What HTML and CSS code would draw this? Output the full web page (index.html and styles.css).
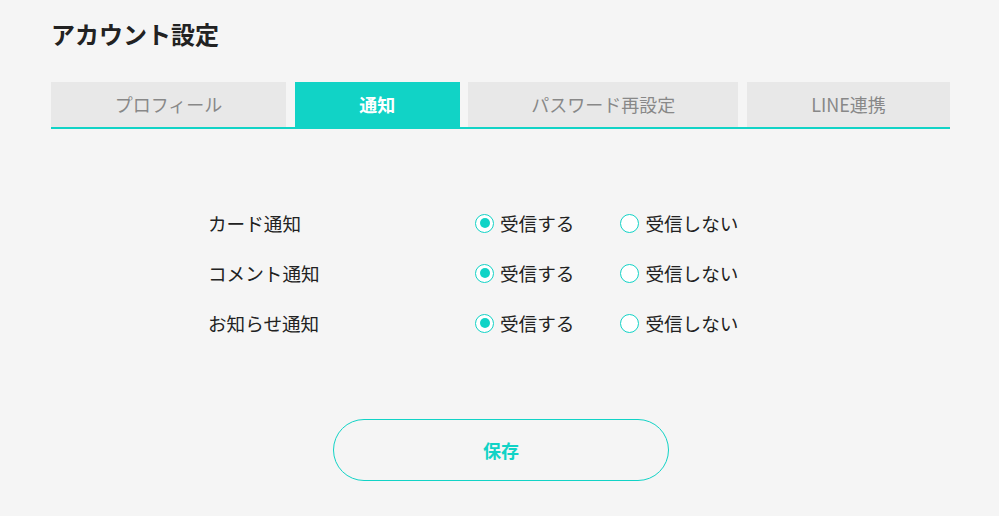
FILE: index.html
```html
<!DOCTYPE html>
<html lang="ja">
<head>
<meta charset="utf-8">
<link rel="stylesheet" href="styles.css">
</head>
<body>
<div class="page">
  <h1 class="title">アカウント設定</h1>
  <nav class="tabs">
    <div class="tab">プロフィール</div>
    <div class="tab active">通知</div>
    <div class="tab">パスワード再設定</div>
    <div class="tab">LINE連携</div>
  </nav>
  <div class="settings">
    <div class="row">
      <div class="label">カード通知</div>
      <div class="options">
        <label class="opt"><span class="radio on"></span>受信する</label>
        <label class="opt"><span class="radio"></span>受信しない</label>
      </div>
    </div>
    <div class="row">
      <div class="label">コメント通知</div>
      <div class="options">
        <label class="opt"><span class="radio on"></span>受信する</label>
        <label class="opt"><span class="radio"></span>受信しない</label>
      </div>
    </div>
    <div class="row">
      <div class="label">お知らせ通知</div>
      <div class="options">
        <label class="opt"><span class="radio on"></span>受信する</label>
        <label class="opt"><span class="radio"></span>受信しない</label>
      </div>
    </div>
  </div>
  <div class="actions">
    <button class="save">保存</button>
  </div>
</div>
</body>
</html>
```
FILE: styles.css
```css
html, body {
  margin: 0;
  padding: 0;
  background: #f5f5f5;
}
body {
  font-family: "Noto Sans CJK JP", "Noto Sans", sans-serif;
  color: #222;
}
.page {
  width: 899px;
  margin-left: 51px;
  padding-top: 16px;
}
.title {
  margin: 0;
  font-size: 24px;
  font-weight: 700;
  line-height: 36px;
  color: #222;
}
.tabs {
  margin-top: 30px;
  display: grid;
  grid-template-columns: 235px 165px 270px 203px;
  justify-content: space-between;
  border-bottom: 2px solid #11d3c6;
}
.tab {
  height: 45px;
  background: #e8e8e8;
  color: #888;
  font-size: 18px;
  line-height: 45px;
  text-align: center;
}
.tab.active {
  background: #11d3c6;
  color: #fff;
  font-weight: 700;
}
.settings {
  padding-top: 81px;
  padding-left: 157px;
  display: flex;
  flex-direction: column;
  gap: 24px;
}
.row {
  display: flex;
  align-items: center;
  height: 26px;
}
.label {
  width: 267px;
  font-size: 18.6px;
  line-height: 26px;
}
.options {
  display: flex;
  gap: 46px;
}
.opt {
  display: flex;
  align-items: center;
  font-size: 18.6px;
  line-height: 26px;
  gap: 6px;
}
.radio {
  width: 17px;
  height: 17px;
  border: 1.5px solid #11d3c6;
  border-radius: 50%;
  background: #fff;
  display: flex;
  align-items: center;
  justify-content: center;
}
.radio.on::after {
  content: "";
  width: 10px;
  height: 10px;
  border-radius: 50%;
  background: #11d3c6;
}
.actions {
  display: flex;
  justify-content: center;
  padding-top: 83px;
  padding-left: 1px;
}
.save {
  width: 336px;
  height: 62px;
  border: 1px solid #11d3c6;
  border-radius: 31px;
  background: #f5f5f5;
  color: #11d3c6;
  font-family: "Noto Sans CJK JP", sans-serif;
  font-size: 18px;
  font-weight: 700;
  cursor: pointer;
}
```
